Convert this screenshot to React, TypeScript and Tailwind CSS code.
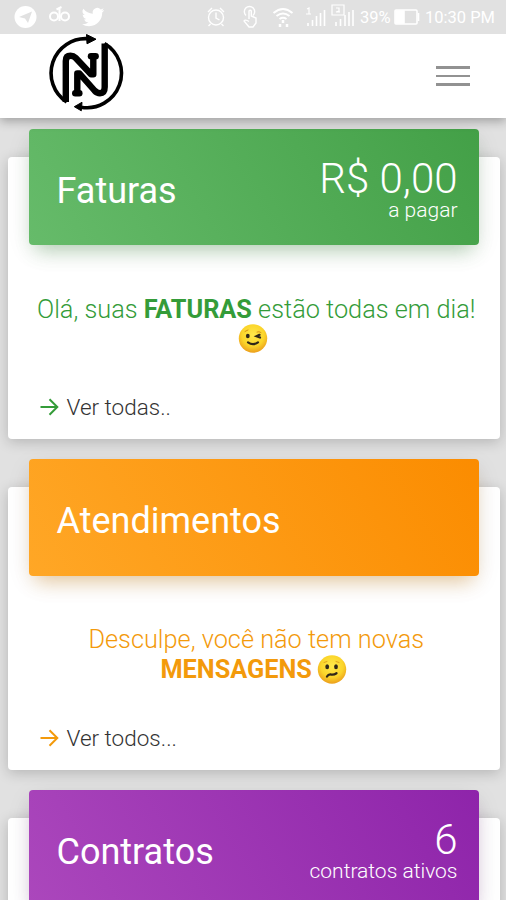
import type { ReactNode } from "react";

function Logo() {
  return (
    <svg className="ml-[46px] h-[82px] w-[80px]" viewBox="46 32 80 82" fill="none" stroke="#000" strokeLinejoin="round" aria-label="N">
      <path d="M66.7 102A34.5 34.5 0 0 1 88 38.700" strokeWidth="3.600" />
      <path d="M86.500 34.500L96 39.200L87 43.800Z" fill="#000" strokeWidth="1" />
      <path d="M65.800 102V61Q65.800 55.800 70.500 55.800Q73.500 55.800 75.500 57.800L91 74.300H93.300V57" strokeWidth="6.400" />
      <path d="M91 56.300H95.600" strokeWidth="6.500" strokeLinecap="round" />
      <path d="M77.300 92V73.500H79.500L94.500 90.500Q97 93.200 100 93.200Q104.700 93.200 104.700 87V43.500" strokeWidth="6.400" />
      <path d="M75.300 93.200H79.300" strokeWidth="6.500" strokeLinecap="round" />
      <path d="M104.500 43.500A34.500 34.500 0 0 1 81 107.200" strokeWidth="3.600" />
      <path d="M82 102.300L74.300 106.700L81.300 110.800Z" fill="#000" strokeWidth="1" />
    </svg>
  );
}

function StatusBar() {
  return (
    <div className="flex h-[34px] shrink-0 items-center bg-[#e1e1e1] text-white">
      <svg className="h-[34px] w-[358px] shrink-0" viewBox="0 0 358 34" fill="none" stroke="#fff" strokeWidth="1.4">
        <circle cx="25.5" cy="17" r="11" fill="#fff" stroke="none" />
        <path d="M19 17L32 11.5L28 23L25 18.5Z" fill="#e1e1e1" stroke="none" />
        <g strokeWidth="2">
          <circle cx="54" cy="16.500" r="4" />
          <circle cx="65" cy="16.500" r="4" />
          <path d="M59.5 9V21M56.500 9.500L61.500 7" />
        </g>
        <path transform="translate(82 5.5) scale(.94)" fill="#fff" stroke="none" d="M23.6 4.9c-.9.4-1.8.6-2.8.8 1-.6 1.8-1.6 2.2-2.7-1 .6-2 1-3.100 1.200A4.900 4.900 0 0 0 11.500 8.700 14 14 0 0 1 1.400 3.500a4.900 4.900 0 0 0 1.500 6.600c-.8 0-1.600-.2-2.200-.6v.1c0 2.400 1.700 4.400 3.900 4.800a5 5 0 0 1-2.200.1 4.900 4.900 0 0 0 4.600 3.400A9.900 9.900 0 0 1 0 19.900a14 14 0 0 0 7.500 2.200c9.100 0 14-7.500 14-14v-.6c1-.7 1.800-1.600 2.100-2.600z" />
        <circle cx="216" cy="17.500" r="7.500" />
        <path d="M216 12.500V18L219.500 20M208 12L212 8M220 8L224 12M210.500 24L208.500 26M221.500 24L223.500 26" />
        <path d="M246 15.500A5.200 5.200 0 1 1 253 15.500M249 19V11Q250.200 9.500 251.300 11V16L256 18V23L253 27H249L244 21Q245 19 249 21.500" />
        <path d="M273.500 13Q283 5 292.500 13M276.500 16Q283 11 289.500 16M279.500 19Q283 16.500 286.500 19" strokeWidth="2" />
        <path d="M283 20V23M280 24V27M287 24V27" strokeWidth="2.500" />
        <path d="M307 9L309 8V14M306 14H311M332 5H344V15H332ZM336 8H339V11L336 12H340" strokeWidth="1.200" />
        <path d="M308 23V26M312.500 20V26M316.500 16V26M320.500 13V26M324.500 10V26M336 22V26M340.500 19V26M345 15V26M349 12V26M353 10V26" strokeWidth="1.600" />
      </svg>
      <span className="w-[36px] text-[16.500px] leading-[34px]">
        <span className="relative top-[1px] ml-[2px]">39%</span>
      </span>
      <svg className="h-[18px] w-[26px] shrink-0" viewBox="0 0 26 18" fill="none" stroke="#fff" strokeWidth="1.600">
        <rect x="1" y="2" width="22" height="14" rx="1" />
        <path d="M2 3H10V15H2ZM24.500 5V13" fill="#fff" />
      </svg>
      <span className="relative top-px ml-[5px] whitespace-nowrap text-[16.500px] leading-[34px]">10:30 PM</span>
    </div>
  );
}

function Face({ sad = false }: { sad?: boolean }) {
  return (
    <svg className="-ml-px inline-block h-[29px] w-[30px] align-top" viewBox="0 0 30 29">
      <defs>
        <radialGradient id={sad ? "sad" : "wink"} cx="50%" cy="38%" r="60%">
          <stop offset="0" stopColor="#ffe84b" />
          <stop offset=".65" stopColor="#fbd52a" />
          <stop offset="1" stopColor="#eda31d" />
        </radialGradient>
      </defs>
      <circle cx="15" cy="14.500" r="14.200" fill={sad ? "url(#sad)" : "url(#wink)"} />
      {sad ? (
        <g fill="none" stroke="#302719" strokeLinecap="round">
          <ellipse cx="10.200" cy="11.800" rx="1.900" ry="2.500" fill="#302719" stroke="none" />
          <ellipse cx="19" cy="11.800" rx="1.900" ry="2.500" fill="#302719" stroke="none" />
          <path d="M10 21.500Q11.500 19 14 19.500Q17 20 19.500 18.200" strokeWidth="2.300" />
          <path d="M7 7.500L10 6.500M19 6.500L22 7.500" stroke="#d99317" strokeWidth=".8" />
        </g>
      ) : (
        <g fill="none" stroke="#302719" strokeLinecap="round">
          <ellipse cx="9.800" cy="12" rx="1.900" ry="2.300" fill="#302719" stroke="none" />
          <path d="M21.500 10.800L18.500 12.200L22 13.500M10 18.300Q15 22 20 18.300" strokeWidth="2.200" />
          <path d="M7 7.500L10 6M19 8Q21 7 23 8.500" stroke="#d99317" strokeWidth="1" />
        </g>
      )}
    </svg>
  );
}

interface CardProps {
  title: string;
  banner: string;
  value?: string;
  caption?: string;
  tone: string;
  link?: string;
  children?: ReactNode;
}

function Card({ title, banner, value, caption, tone, link, children }: CardProps) {
  return (
    <section className="ml-2 mr-[6.500px] mb-[48px] h-[282.500px] shrink-0 rounded-[4px] bg-white px-[20.500px] shadow-[0_3px_14px_rgba(0,0,0,0.2)]">
      <div className={`-mt-[28px] flex h-[116.500px] items-center justify-between rounded-[4px] pl-[28px] pr-[21.500px] text-white ${banner}`}>
        <h2 className="mt-[8px] text-[36px] font-normal leading-[42px]">{title}</h2>
        {value && (
          <div className="mt-[5px] text-right font-light">
            <div className="text-[42px] leading-[42px]">{value}</div>
            <div className="text-[21px] leading-[20px]">{caption}</div>
          </div>
        )}
      </div>
      {link && (
        <>
          <div className={`mt-[49.500px] h-[59px] whitespace-nowrap text-center text-[25.300px] font-light leading-[29.500px] ${tone}`}>{children}</div>
          <div className={`mt-[38.500px] flex h-[30px] items-center pl-[10px] ${tone}`}>
            <svg className="h-[20px] w-[20px]" viewBox="0 0 20 20" fill="none" stroke="currentColor" strokeWidth="2">
              <path d="M1.500 10H18M10.500 2.200L18.300 10L10.500 17.800" />
            </svg>
            <span className="ml-[8px] text-[22.500px] font-light leading-[30px] text-[#333]">{link}</span>
          </div>
        </>
      )}
    </section>
  );
}

export default function App() {
  return (
    <div className="flex h-[900px] w-[506px] flex-col overflow-hidden bg-[#e1e1e1] font-[Roboto,sans-serif]">
      <StatusBar />
      <header className="flex h-[84px] shrink-0 items-center justify-between bg-white shadow-[0_3px_10px_rgba(0,0,0,0.3)] [clip-path:inset(0_0_-20px_0)]">
        <div className="-mt-[6px]">
          <Logo />
        </div>
        <button aria-label="Menu" className="mr-[36px] flex w-[34px] flex-col gap-[6px]">
          <span className="h-[2.500px] bg-[#929292]" />
          <span className="h-[2.500px] bg-[#929292]" />
          <span className="h-[2.500px] bg-[#929292]" />
        </button>
      </header>
      <main className="flex flex-col pt-[38.500px]">
        <Card
          title="Faturas"
          value="R$ 0,00"
          caption="a pagar"
          link="Ver todas.."
          tone="text-[#349c39]"
          banner="bg-[linear-gradient(60deg,#66bb6a,#43a047)] shadow-[0_7px_24px_-4px_rgba(0,0,0,0.15),0_12px_18px_-7px_rgba(76,175,80,0.3)]"
        >
          <div className="pl-[5px]">
            Olá, suas <b className="font-bold">FATURAS</b> estão todas em dia!
          </div>
          <Face />
        </Card>
        <Card
          title="Atendimentos"
          link="Ver todos..."
          tone="text-[#f39a0b]"
          banner="bg-[linear-gradient(60deg,#ffa726,#fb8c00)] shadow-[0_7px_24px_-4px_rgba(0,0,0,0.15),0_12px_18px_-7px_rgba(255,152,0,0.3)]"
        >
          <div className="pl-[5px]">Desculpe, você não tem novas</div>
          <b className="font-bold">MENSAGENS</b> <Face sad />
        </Card>
        <Card
          title="Contratos"
          value="6"
          caption="contratos ativos"
          tone="text-[#9c27b0]"
          banner="bg-[linear-gradient(60deg,#ab47bc,#8e24aa)] shadow-[0_7px_24px_-4px_rgba(0,0,0,0.15),0_12px_18px_-7px_rgba(156,39,176,0.3)]"
        />
      </main>
    </div>
  );
}
